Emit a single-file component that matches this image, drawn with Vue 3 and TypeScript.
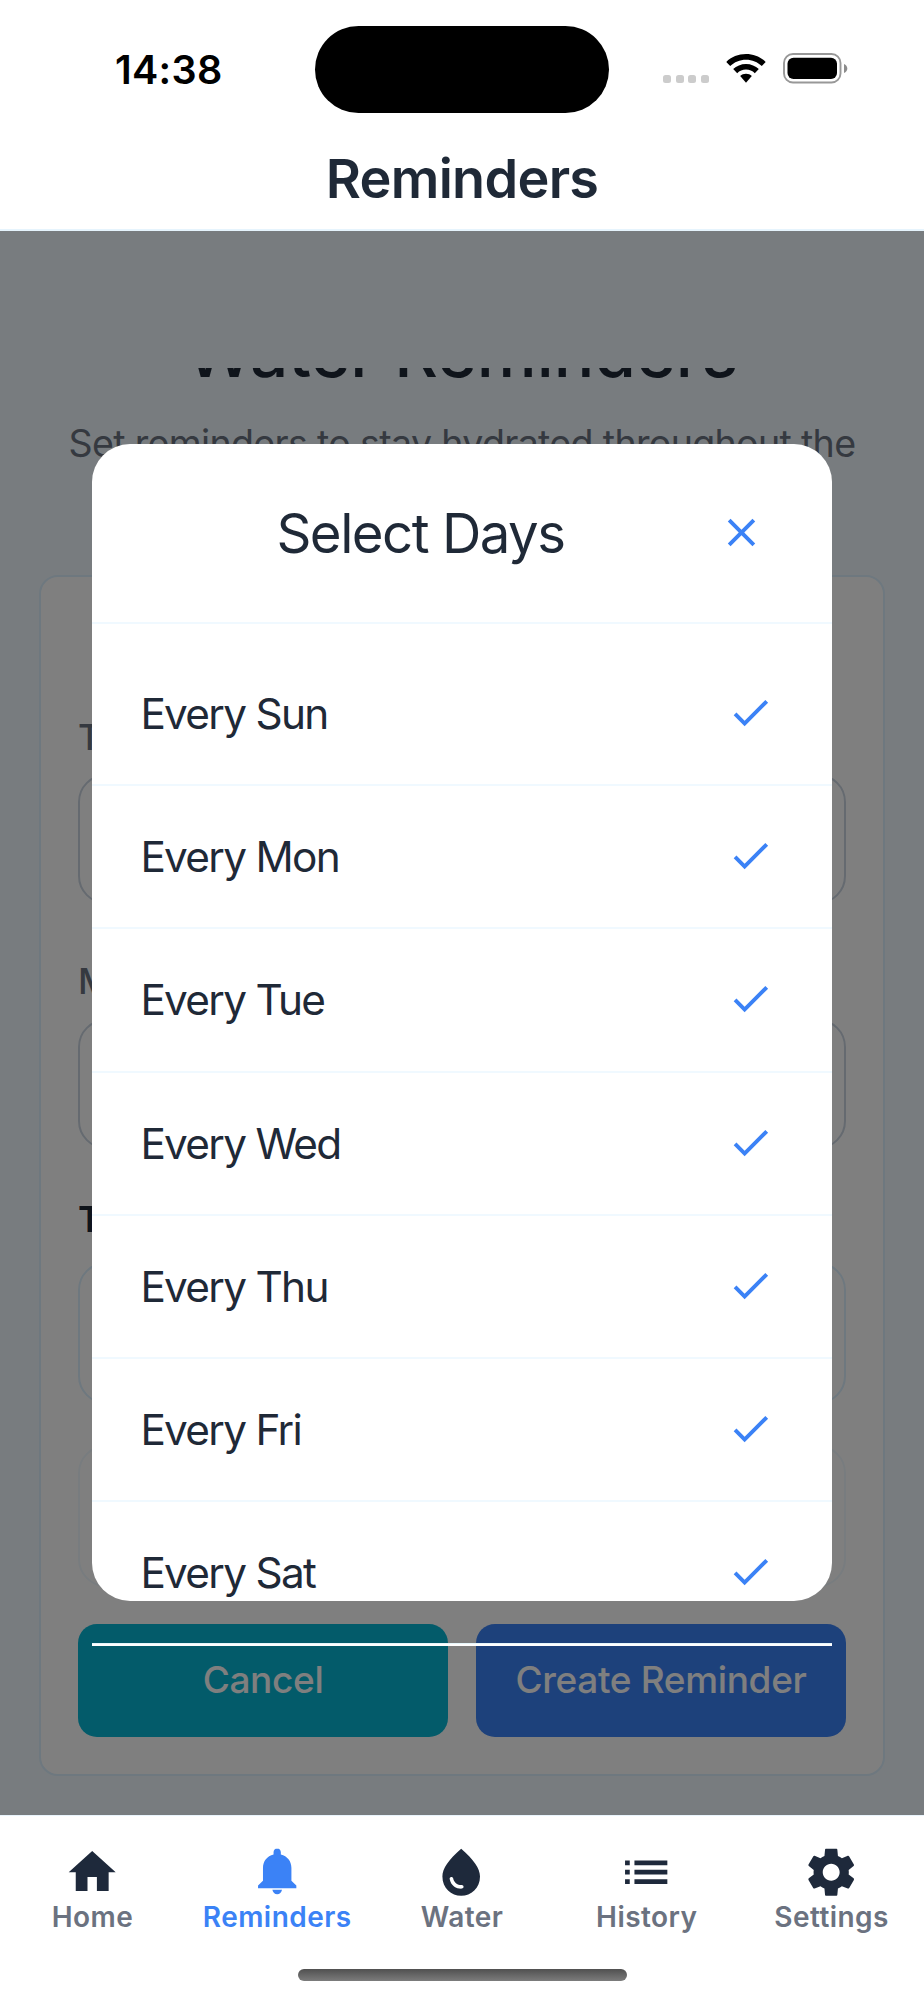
<script setup lang="ts">
interface Tab {
  label: string
  icon: string
  active?: boolean
}

const days: string[] = ['Sun', 'Mon', 'Tue', 'Wed', 'Thu', 'Fri', 'Sat']

const tabs: Tab[] = [
  { label: 'Home', icon: 'M10 20v-6h4v6h5v-8h3L12 3 2 12h3v8z' },
  {
    label: 'Reminders',
    active: true,
    icon: 'M12 1.900c-.88 0-1.550.7-1.550 1.600v.95C7.700 5.100 5.950 7.300 5.950 10.100v5.500L3.850 17.700v1.100h16.300v-1.100l-2.100-2.100v-5.500c0-2.800-1.750-5-4.500-5.650v-.95c0-.9-.67-1.600-1.550-1.600zM9.950 19.500c.2 1.100 1 1.900 2.050 1.900s1.850-.8 2.050-1.900z'
  },
  {
    label: 'Water',
    icon: 'M12 2c-5.33 4.55-8 8.48-8 11.8 0 4.98 3.8 8.2 8 8.2s8-3.22 8-8.2c0-3.32-2.67-7.25-8-11.8zM7.83 14c.37 0 .67.26.74.62.41 2.22 2.28 2.98 3.64 2.87.43-.02.79.32.79.75 0 .4-.32.73-.72.75-2.13.13-4.62-1.09-5.19-4.12-.08-.45.28-.87.74-.87z'
  },
  {
    label: 'History',
    icon: 'M3 13h2v-2H3v2zm0 4h2v-2H3v2zm0-8h2V7H3v2zm4 4h14v-2H7v2zm0 4h14v-2H7v2zM7 7v2h14V7H7z'
  },
  {
    label: 'Settings',
    icon: 'M19.43 12.98c.04-.32.07-.64.07-.98s-.03-.66-.07-.98l2.11-1.65c.19-.15.24-.42.12-.64l-2-3.46c-.12-.22-.39-.3-.61-.22l-2.49 1c-.52-.4-1.08-.73-1.69-.98l-.25-2.650C14.600 2.180 14.400 2 14.150 2h-4.300c-.25 0-.45.18-.47.42l-.25 2.650c-.61.25-1.170.590-1.690.980l-2.490-1c-.23-.09-.49 0-.61.22l-2 3.46c-.13.22-.07.49.12.64l2.11 1.65c-.04.32-.07.65-.07.98s.03.66.07.98l-2.11 1.65c-.19.15-.24.42-.12.64l2 3.46c.12.22.39.3.61.22l2.49-1c.52.4 1.08.73 1.69.98l.25 2.650c.02.24.22.42.47.42h4.300c.25 0 .45-.18.47-.42l.25-2.650c.61-.25 1.170-.590 1.690-.980l2.490 1c.23.09.49 0 .61-.22l2-3.46c.12-.22.07-.49-.12-.64l-2.11-1.65zM12 15.6c-1.98 0-3.6-1.62-3.6-3.600s1.62-3.600 3.600-3.600 3.600 1.620 3.600 3.600-1.620 3.600-3.600 3.600z'
  }
]
</script>

<template>
  <div class="phone">
    <div class="status">
      <span class="time">14:38</span>
      <div class="island"></div>
      <div class="indicators">
        <div class="dots"><i v-for="n in 4" :key="n"></i></div>
        <svg class="wifi" viewBox="0 0 40 30" width="40" height="30">
          <path d="M20 0C12.300 0 5.300 2.900 0.300 7.900L4.200 12C8.300 8 13.800 5.700 20 5.700S31.700 8 35.800 12L39.700 7.900C34.700 2.900 27.700 0 20 0z" />
          <path d="M20 9.900C15 9.900 10.500 11.900 7.200 15.100L11.200 19.200C13.500 17 16.600 15.600 20 15.600S26.500 17 28.800 19.200L32.800 15.100C29.500 11.900 25 9.900 20 9.900z" />
          <path d="M20 19.700C17.700 19.700 15.700 20.600 14.200 22L20 28.800 25.800 22C24.300 20.600 22.300 19.700 20 19.700z" />
        </svg>
        <svg class="battery" viewBox="0 0 65 31" width="65" height="31">
          <rect x="1" y="1" width="56.500" height="28.500" rx="9" fill="none" stroke="#989898" stroke-width="1.900" />
          <rect x="4.500" y="4.700" width="49.500" height="21.300" rx="6" />
          <path d="M61 11c2 .7 3.300 2.500 3.300 4.500s-1.300 3.800-3.300 4.500z" fill="#8c8c8c" />
        </svg>
      </div>
    </div>
    <header class="header"><h1>Reminders</h1></header>

    <main class="screen">
      <div class="scroll">
        <h2 class="page-title">Water Reminders</h2>
        <p class="subtitle">Set reminders to stay hydrated throughout the</p>
        <section class="card">
          <div class="label">T</div>
          <div class="field"></div>
          <div class="label second">M</div>
          <div class="field next"></div>
          <div class="label dark">T</div>
          <div class="picker"></div>
          <div class="picker faint"></div>
          <div class="actions">
            <button class="btn cancel">Cancel</button>
            <button class="btn create">Create Reminder</button>
          </div>
        </section>
      </div>

      <div class="overlay">
        <div class="modal">
          <div class="modal-head">
            <h3>Select Days</h3>
            <svg class="glyph" viewBox="0 0 24 24">
              <path d="M19 6.410L17.590 5 12 10.590 6.410 5 5 6.410 10.590 12 5 17.590 6.410 19 12 13.410 17.590 19 19 17.590 13.410 12z" />
            </svg>
          </div>
          <div class="list">
            <div v-for="day in days" :key="day" class="row">
              <span>Every {{ day }}</span>
              <svg class="glyph" viewBox="0 0 24 24">
                <path d="M9 16.170L4.830 12l-1.420 1.410L9 19 21 7l-1.410-1.410z" />
              </svg>
            </div>
          </div>
        </div>
        <div class="footer-line"></div>
      </div>
    </main>

    <nav class="tabs">
      <div class="tab-row">
        <div v-for="tab in tabs" :key="tab.label" class="tab" :class="{ active: tab.active }">
          <svg viewBox="0 0 24 24"><path :d="tab.icon" /></svg>
          <span>{{ tab.label }}</span>
        </div>
      </div>
      <div class="home-bar"></div>
    </nav>
  </div>
</template>

<style>
body {
  margin: 0;
  background: #fff;
}
</style>

<style scoped>
* {
  box-sizing: border-box;
}
h1,
h2,
h3,
p {
  margin: 0;
}
.phone {
  width: 924px;
  height: 2000px;
  display: flex;
  flex-direction: column;
  overflow: hidden;
  background: #fff;
  color: #1f2937;
  font-family: Inter, 'Liberation Sans', sans-serif;
  white-space: nowrap;
}
.status {
  height: 129px;
  display: grid;
  grid-template-columns: 315px 294px 315px;
  padding-top: 26px;
  color: #000;
}
.time {
  padding-left: 115px;
  font-size: 39.500px;
  font-weight: 600;
  line-height: 88px;
  letter-spacing: 0.300px;
}
.island {
  height: 87px;
  border-radius: 44px;
  background: #000;
}
.indicators {
  display: flex;
  align-items: flex-start;
  padding: 27px 0 0 54px;
}
.dots {
  display: flex;
  gap: 4.500px;
  margin-top: 22px;
}
.dots i {
  width: 8px;
  height: 8px;
  border-radius: 2.500px;
  background: #ccc;
}
.wifi {
  margin: 1px 0 0 17px;
}
.battery {
  margin-left: 17px;
}
.header {
  height: 102px;
  border-bottom: 2.500px solid #e6f4fd;
  display: flex;
  justify-content: center;
}
.header h1 {
  font-size: 54px;
  font-weight: 600;
  line-height: 100px;
  letter-spacing: -0.700px;
}
.screen {
  position: relative;
  height: 1584px;
  padding-top: 137px;
  background: #f0f9ff;
}
.scroll {
  height: 1447px;
  overflow: hidden;
}
.page-title {
  margin-top: -55px;
  line-height: 80px;
  font-size: 67.500px;
  font-weight: 500;
  text-align: center;
}
.subtitle {
  margin-top: 26px;
  line-height: 50px;
  font-size: 37.600px;
  letter-spacing: -0.680px;
  text-align: center;
  color: #6b7280;
}
.card {
  margin: 106px 39px 0;
  height: 1201px;
  padding: 139px 37px 0;
  border: 2px solid #dcf0fe;
  border-radius: 19px;
  background: #fff;
}
.label {
  height: 42px;
  line-height: 42px;
  font-size: 36px;
  font-weight: 500;
  color: #6b7280;
}
.label.second {
  margin-top: 56px;
}
.label.dark {
  margin-top: 49px;
  font-weight: 600;
  color: #1f2937;
}
.field {
  height: 130px;
  margin-top: 16px;
  border: 2px solid #cbd5e1;
  border-radius: 28px;
}
.field.next {
  margin-top: 17px;
}
.picker {
  height: 142px;
  margin-top: 22px;
  border: 2px solid #dcf0fe;
  border-radius: 28px;
}
.picker.faint {
  margin-top: 41px;
  border-color: #f0f9ff;
}
.actions {
  display: grid;
  grid-template-columns: 1fr 1fr;
  gap: 28px;
  margin-top: 37px;
}
.btn {
  height: 113px;
  border: 0;
  border-radius: 19px;
  padding: 0 0 2px;
  color: #fff;
  font-family: inherit;
  font-size: 37px;
  font-weight: 500;
  line-height: 111px;
  letter-spacing: -0.350px;
}
.cancel {
  background: #06b6d4;
}
.create {
  background: #3b82f6;
}
.overlay {
  position: absolute;
  inset: 0;
  padding: 213px 92.400px 0;
  background: rgba(0, 0, 0, 0.5);
}
.modal {
  height: 1157px;
  border-radius: 38px;
  overflow: hidden;
  background: #fff;
}
.modal-head {
  height: 180px;
  padding: 0 67px 2px 184px;
  border-bottom: 2px solid #f0f9ff;
  display: flex;
  align-items: center;
  justify-content: space-between;
}
.modal-head h3 {
  padding-top: 2px;
  font-size: 54.500px;
  font-weight: 400;
  line-height: 70px;
  letter-spacing: -1.500px;
}
.glyph {
  width: 47px;
  height: 47px;
  fill: #3b82f6;
}
.list {
  padding-top: 18.800px;
}
.row {
  height: 143.250px;
  padding: 0 58px 0 48px;
  border-bottom: 2px solid #f0f9ff;
  display: flex;
  align-items: center;
  justify-content: space-between;
  font-size: 42.300px;
  letter-spacing: -1.700px;
}
.row .glyph {
  margin-bottom: 2px;
}
.footer-line {
  height: 3px;
  margin-top: 42px;
  background: #fff;
  border-top: 1px solid #e6f6fb;
}
.tabs {
  height: 185px;
  border-top: 1px solid #e9f4fc;
  display: flex;
  flex-direction: column;
  align-items: center;
}
.tab-row {
  width: 924px;
  height: 153px;
  padding-top: 28px;
  display: grid;
  grid-template-columns: repeat(5, 1fr);
}
.tab {
  display: flex;
  flex-direction: column;
  align-items: center;
  color: #6b7280;
  font-size: 28px;
  font-weight: 600;
  letter-spacing: 0.450px;
}
.tab svg {
  width: 56.400px;
  height: 56.400px;
  margin-right: 1px;
  fill: #1e293b;
}
.tab span {
  line-height: 34px;
}
.active {
  color: #3b82f6;
}
.tab.active svg {
  fill: #3b82f6;
}
.home-bar {
  width: 329px;
  height: 12px;
  border-radius: 6px;
  background: linear-gradient(#505050, #7c7c7c);
}
</style>
